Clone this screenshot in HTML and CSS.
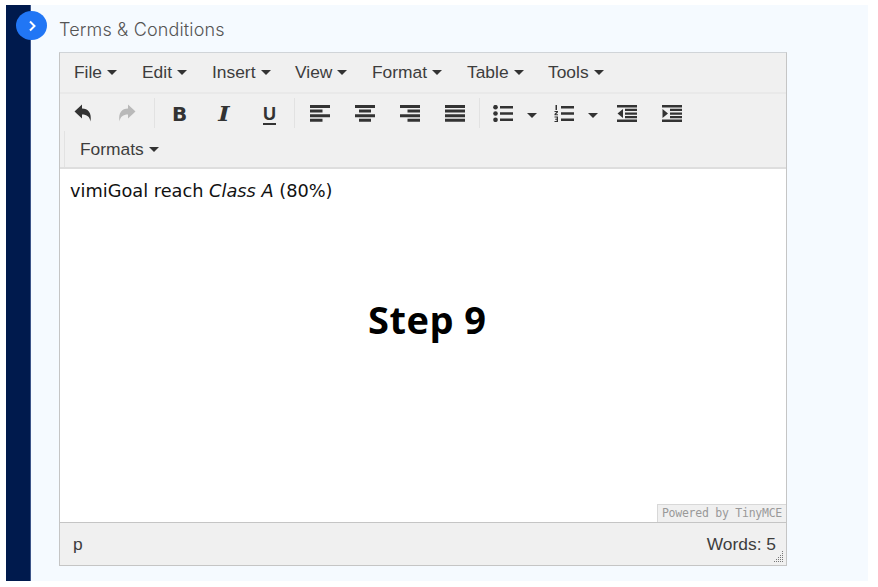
FILE: index.html
```html
<!DOCTYPE html>
<html lang="en">
<head>
<meta charset="utf-8">
<title>Terms &amp; Conditions</title>
<link rel="stylesheet" href="styles.css">
</head>
<body>
<div class="shell">
  <aside class="rail"></aside>
  <button class="toggle" aria-label="Expand">
    <svg width="10" height="12" viewBox="0 0 10 12"><path d="M3 1.500 7.500 6 3 10.500" fill="none" stroke="#fff" stroke-width="2"/></svg>
  </button>
  <main class="panel">
    <h2 class="title">Terms &amp; Conditions</h2>
    <section class="editor">
      <nav class="menubar">
        <span class="menu m-file">File<i class="caret"></i></span>
        <span class="menu m-edit">Edit<i class="caret"></i></span>
        <span class="menu m-insert">Insert<i class="caret"></i></span>
        <span class="menu m-view">View<i class="caret"></i></span>
        <span class="menu m-format">Format<i class="caret"></i></span>
        <span class="menu m-table">Table<i class="caret"></i></span>
        <span class="menu m-tools">Tools<i class="caret"></i></span>
      </nav>
      <div class="toolbar">
        <div class="row">
          <div class="group g-history">
            <svg class="ico" viewBox="0 0 18 18"><path d="M0.500 7.500 8 0.500V4.500C14 4.500 18 8.500 16.500 17.500 15.500 12.500 13 10.500 8 10.500V14.500Z" fill="#333"/></svg>
            <svg class="ico" viewBox="0 0 18 18"><path d="M17.500 7.500 10 0.500V4.500C4 4.500 0 8.500 1.500 17.500 2.500 12.500 5 10.500 10 10.500V14.500Z" fill="#b9b9b9"/></svg>
          </div>
          <div class="group g-style">
            <span class="glyph bold">B</span>
            <span class="glyph italic">I</span>
            <span class="glyph under">U</span>
          </div>
          <div class="group g-align">
            <svg class="ico" viewBox="0 0 20 17"><path d="M0 0h20v3H0zM0 4.600h12.500v3H0zM0 9.200h20v3H0zM0 13.800h12.500v3H0z" fill="#333"/></svg>
            <svg class="ico" viewBox="0 0 20 17"><path d="M0 0h20v3H0zM4 4.600h12v3H4zM0 9.200h20v3H0zM4 13.800h12v3H4z" fill="#333"/></svg>
            <svg class="ico" viewBox="0 0 20 17"><path d="M0 0h20v3H0zM7.500 4.600h12.500v3H7.500zM0 9.200h20v3H0zM7.500 13.800h12.500v3H7.500z" fill="#333"/></svg>
            <svg class="ico" viewBox="0 0 20 17"><path d="M0 0h20v3H0zM0 4.600h20v3H0zM0 9.200h20v3H0zM0 13.800h20v3H0z" fill="#333"/></svg>
          </div>
          <div class="group g-list">
            <svg class="ico" viewBox="0 0 20 17"><circle cx="2.500" cy="2.200" r="2.300" fill="#333"/><circle cx="2.500" cy="8.500" r="2.300" fill="#333"/><circle cx="2.500" cy="14.800" r="2.300" fill="#333"/><path d="M7 1h13v2.400H7zM7 7.300h13v2.400H7zM7 13.600h13v2.400H7z" fill="#333"/></svg>
            <i class="caret list-caret"></i>
            <svg class="ico" viewBox="0 0 20 17"><path d="M1.500 0h1.500v5h-1.500zM0.500 6h3.500v1.200l-2 2h2v1h-3.500v-1.200l2-2h-2zM0.500 11.500h3.500v5.500h-3.500v-1h2.200v-1.200h-1.500v-1h1.500v-1.300h-2.200zM7 1h13v2.400H7zM7 7.300h13v2.400H7zM7 13.600h13v2.400H7z" fill="#333"/></svg>
            <i class="caret list-caret"></i>
            <svg class="ico" viewBox="0 0 20 17"><path d="M0 0h20v2.500H0zM8 3.800h12v2.300H8zM8 7.400h12v2.300H8zM8 11h12v2.300H8zM0 14.500h20v2.500H0zM6 4V13L0.500 8.500Z" fill="#333"/></svg>
            <svg class="ico" viewBox="0 0 20 17"><path d="M0 0h20v2.500H0zM8 3.800h12v2.300H8zM8 7.400h12v2.300H8zM8 11h12v2.300H8zM0 14.500h20v2.500H0zM0.500 4V13L6 8.500Z" fill="#333"/></svg>
          </div>
        </div>
        <div class="row row-formats">
          <span class="menu formats">Formats<i class="caret"></i></span>
        </div>
      </div>
      <div class="content">
        <p class="body-text">vimiGoal reach <em>Class A</em> (80%)</p>
        <span class="brand">Powered by TinyMCE</span>
      </div>
      <footer class="status">
        <span class="path">p</span>
        <span class="words">Words: 5</span>
        <svg class="grip" viewBox="0 0 12 12"><path d="M10 0h1v1h-1zM10 2h1v1h-1zM10 4h1v1h-1zM10 6h1v1h-1zM10 8h1v1h-1zM10 10h1v1h-1zM8 4h1v1H8zM8 6h1v1H8zM8 8h1v1H8zM8 10h1v1H8zM6 6h1v1H6zM6 8h1v1H6zM6 10h1v1H6zM4 8h1v1H4zM4 10h1v1H4zM2 10h1v1H2z" fill="#777"/></svg>
      </footer>
    </section>
  </main>
  <div class="step">Step 9</div>
</div>
</body>
</html>
```

FILE: styles.css
```css
* { box-sizing: border-box; }
html, body { margin: 0; height: 100%; background: #fff; }
body { padding: 5px 10px 6px 6px; overflow: hidden; }
.shell { position: relative; display: flex; height: 576px; }
.rail { flex: none; width: 25px; background: #001a4d; border-right: 1px solid #3c5488; }
.toggle {
  position: absolute; left: 10px; top: 6px; width: 31px; height: 29px; padding: 0;
  border: 0; border-radius: 50%; background: #2176f5;
  display: flex; align-items: center; justify-content: center;
}
.panel { flex: 1; background: #f5faff; padding: 0 81px 0 28px; }
.title {
  margin: 0; height: 47px; padding-top: 13px;
  font: 300 18px/24px "Inter", sans-serif; color: #555; letter-spacing: .15px;
}
.editor {
  height: 514px; display: flex; flex-direction: column;
  border: 1px solid #c5c5c5; border-top-color: #d0d4d8; background: #f0f0f0;
  font-family: "Liberation Sans", sans-serif; color: #333;
}
.menubar {
  height: 41px; flex: none; display: flex; align-items: center; padding-left: 14px;
  border-bottom: 2px solid #e9e9e9;
}
.menu { display: inline-flex; align-items: center; font-size: 17.400px; color: #3d3d3d; white-space: nowrap; }
.m-file { width: 68px; } .m-edit { width: 70px; } .m-insert { width: 83px; }
.m-view { width: 77px; } .m-format { width: 95px; } .m-table { width: 81px; }
.caret {
  display: inline-block; width: 0; height: 0; margin-left: 5px;
  border-left: 5px solid transparent; border-right: 5px solid transparent; border-top: 5px solid #333;
}
.toolbar { height: 75px; flex: none; border-bottom: 2px solid #dedede; }
.row { display: flex; height: 37px; padding-top: 4px; }
.group { display: flex; align-items: center; height: 30px; border-right: 1px solid #e2e2e2; }
.g-history { width: 95px; padding-left: 14px; gap: 26px; }
.g-style { width: 140px; padding-left: 17px; }
.g-align { width: 185px; padding-left: 15px; gap: 25px; }
.g-list { border: 0; padding-left: 13px; }
.ico { width: 20px; height: 17px; display: block; flex: none; }
.g-history .ico { width: 18px; height: 18px; }
.list-caret { margin-left: 14px; margin-right: 17px; margin-top: 4px; }
.g-list .ico:nth-last-of-type(2) { margin-left: 2px; margin-right: 25px; }
.glyph { flex: none; width: 45px; color: #333; }
.bold { font: 700 20px/24px "DejaVu Sans", sans-serif; padding-top: 2px; }
.italic { font: italic 700 21px/24px "DejaVu Serif", serif; padding-left: 4px; padding-top: 1px; transform: scaleX(1.15); }
.under { font: 700 18px/24px "Liberation Sans", sans-serif; width: 38px; padding-top: 1px; padding-left: 1px; text-decoration: underline; text-decoration-thickness: 2px; text-underline-offset: 3px; }
.row-formats { height: 36px; padding: 0; margin-left: 4px; align-items: center; }
.formats { height: 36px; padding-left: 15px; border-left: 1px solid #e2e2e2; }
.content { position: relative; flex: 1; background: #fff; }
.body-text {
  margin: 0; padding: 11px 10px 0 10px;
  font: 400 17.750px/22px "DejaVu Sans", sans-serif; color: #111;
}
.brand {
  position: absolute; right: 0; bottom: 0; height: 18px; padding: 0 4px;
  border: 1px solid #d8d8d8; border-right: 0; border-bottom: 0; background: #f0f0f0;
  font: 11.500px/17px "DejaVu Sans Mono", monospace; letter-spacing: -.25px; color: #999; white-space: nowrap;
}
.status {
  position: relative; height: 43px; flex: none; display: flex; justify-content: space-between; align-items: center;
  padding: 0 10px 0 13px; border-top: 1px solid #c5c5c5; font-size: 17.400px; color: #3d3d3d;
}
.grip { position: absolute; right: 2px; bottom: 2px; width: 12px; height: 12px; }
.step {
  position: absolute; left: 362px; top: 289px;
  font: 700 38px/50px "Open Sans", sans-serif; letter-spacing: .5px; color: #000;
}
```
